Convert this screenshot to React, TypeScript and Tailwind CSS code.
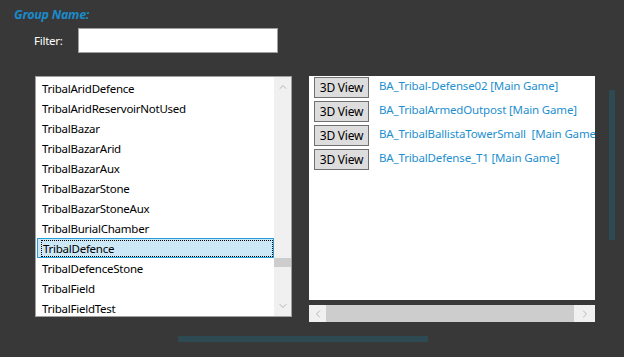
import { ChevronUp, ChevronDown, ChevronLeft, ChevronRight } from "lucide-react";

const ITEMS = [
  "TribalAridDefence",
  "TribalAridReservoirNotUsed",
  "TribalBazar",
  "TribalBazarArid",
  "TribalBazarAux",
  "TribalBazarStone",
  "TribalBazarStoneAux",
  "TribalBurialChamber",
  "TribalDefence",
  "TribalDefenceStone",
  "TribalField",
  "TribalFieldTest",
];

const MODELS = [
  "BA_Tribal-Defense02 [Main Game]",
  "BA_TribalArmedOutpost [Main Game]",
  "BA_TribalBallistaTowerSmall  [Main Game]",
  "BA_TribalDefense_T1 [Main Game]",
];

const SELECTED = "TribalDefence";

export default function App() {
  return (
    <div
      className="w-[624px] h-[357px] bg-[#383838] flex flex-col overflow-hidden text-[11.5px] tracking-[-0.25px]"
      style={{ fontFamily: '"Noto Sans", "Open Sans", sans-serif' }}
    >
      {/* ── Header ── */}
      <div className="h-[26px] pl-[14px] pt-[6px] text-[12.5px] font-bold italic text-[#1b8ac8] leading-[18px]">
        Group Name:
      </div>

      <div className="flex items-center h-[27px] mt-[1px] pl-[34px]">
        <span className="w-[44px] text-white">Filter:</span>
        <div className="w-[200px] h-[25px] bg-white border border-[#a0a0a0]" />
      </div>

      {/* ── Main ── */}
      <div className="flex mt-[22px] pl-[35px]">
        {/* list */}
        <div className="w-[257px] h-[241px] bg-white border border-[#a0a0a0] flex">
          <div className="flex-1 pt-[1px] pl-[1px] overflow-hidden">
            {ITEMS.map((item) => (
              <div
                key={item}
                className={
                  item === SELECTED
                    ? "h-[20px] pl-[4px] pt-[1px] flex items-center bg-[#cce8f7] border border-[#26a0da] text-black"
                    : "h-[20px] pl-[5px] pt-[2px] flex items-center text-black"
                }
              >
                {item === SELECTED ? (
                  <div className="flex-1 h-full flex items-center border border-dotted border-black px-[1px] -ml-[1px]">
                    {item}
                  </div>
                ) : (
                  item
                )}
              </div>
            ))}
          </div>
          <div className="w-[17px] bg-[#f0f0f0] flex flex-col items-center text-[#a3a3a3]">
            <ChevronUp size={12} strokeWidth={1.5} className="mt-[4px]" />
            <div className="mt-[165px] w-full h-[9px] bg-[#cdcdcd]" />
            <ChevronDown size={12} strokeWidth={1.5} className="mt-auto mb-[4px]" />
          </div>
        </div>

        {/* models */}
        <div className="ml-[17px] flex flex-col">
          <div className="w-[286px] h-[224px] bg-white pt-[1px] pl-[5px] flex flex-col gap-[3px] overflow-hidden">
            {MODELS.map((m) => (
              <div key={m} className="flex items-center whitespace-pre">
                <div className="w-[55px] h-[21px] shrink-0 bg-[#dddddd] border border-[#707070] flex items-center justify-center text-black text-[12px]">
                  3D View
                </div>
                <span className="ml-[10px] -mt-[4px] text-[#1e8fcf] tracking-[-0.15px]">{m}</span>
              </div>
            ))}
          </div>
          <div className="mt-[5px] w-[286px] h-[17px] flex">
            <div className="w-[17px] bg-[#f0f0f0] flex items-center justify-center text-[#a3a3a3]">
              <ChevronLeft size={12} strokeWidth={1.5} />
            </div>
            <div className="flex-1 bg-[#cdcdcd]" />
            <div className="w-[21px] bg-[#f0f0f0] flex items-center justify-center text-[#a3a3a3]">
              <ChevronRight size={12} strokeWidth={1.5} />
            </div>
          </div>
        </div>

        <div className="ml-[14px] mt-[14px] w-[6px] h-[150px] bg-[#2d4a53]" />
      </div>

      <div className="mt-[14px] ml-[178px] w-[250px] h-[6px] bg-[#2d4a53]" />
    </div>
  );
}
